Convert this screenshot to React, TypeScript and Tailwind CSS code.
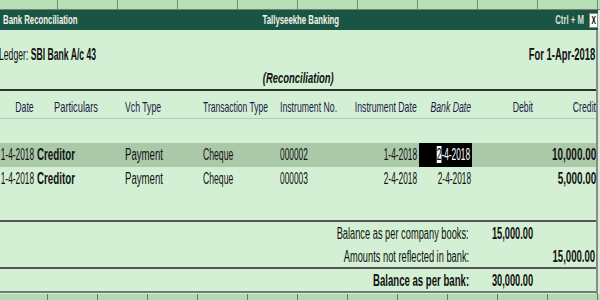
import React from "react";

const S = ({ children, className = "" }: { children: React.ReactNode; className?: string }) => (
  <span className={"inline-block whitespace-nowrap " + className}>{children}</span>
);

const COLS = "grid grid-cols-[35px_85px_80px_75px_70px_75px_55px_60px_62px] items-center";

export default function App() {
  const topCells = Array.from({ length: 9 });
  const botCells = Array.from({ length: 11 });
  return (
    <div
      className="w-[600px] h-[300px] overflow-hidden bg-[#d4f0d4] flex flex-col text-[#111]"
      style={{ fontFamily: '"Liberation Sans", Arial, sans-serif' }}
    >
      {/* top strip */}
      <div className="h-[10px] flex bg-[#b7dfb4] border-b border-[#7c7c7c]">
        <div className="w-[58px] border-r border-[#6f8f6f]" />
        {topCells.map((_, i) => (
          <div key={i} className="w-[60px] shrink-0 border-r border-[#6f8f6f]" />
        ))}
      </div>
      {/* title bar */}
      <div className="h-[20px] w-[598px] bg-[#1a5444] flex items-center text-[13px] font-bold text-[#f4f4e8]">
        <div className="flex-1 pl-[3px]">
          <S className="scale-x-[0.6] origin-left">Bank Reconciliation</S>
        </div>
        <div className="flex-1 flex justify-center">
          <S className="scale-x-[0.6] origin-center">Tallyseekhe Banking</S>
        </div>
        <div className="flex-1 flex justify-end items-center">
          <S className="scale-x-[0.6] origin-right text-[#d8e0d8] mr-[5px]">Ctrl + M</S>
          <div className="w-[9px] h-[15px] bg-white border border-[#888] flex items-center justify-center text-black text-[11px] font-bold">
            <S className="scale-x-[0.6]">X</S>
          </div>
        </div>
      </div>
      {/* body */}
      <div className="w-[598px] flex-1 flex flex-col border-r-2 border-[#8a8a8a]">
        <div className="h-[20px] mt-[15px] flex items-center justify-between text-[16px]">
          <S className="scale-x-[0.54] origin-left -ml-[1px]">
            Ledger: <span className="font-bold">SBI Bank A/c 43</span>
          </S>
          <S className="scale-x-[0.59] origin-right font-bold pr-[1px]">For 1-Apr-2018</S>
        </div>
        <div className="h-[20px] mt-[3px] flex items-center justify-center text-[15px] font-bold italic">
          <S className="scale-x-[0.63] origin-center">(Reconciliation)</S>
        </div>
        <div className="h-[2px] mt-[1px] bg-[#2e2e2e]" />
        {/* header */}
        <div className={COLS + " h-[28px] pt-[5px] text-[15px] text-[#1a1a48] border-b border-[#b9c9b9]"}>
          <div className="flex justify-end pr-[1px]"><S className="scale-x-[0.58] origin-right">Date</S></div>
          <div className="pl-[19px]"><S className="scale-x-[0.62] origin-left">Particulars</S></div>
          <div className="pl-[5px]"><S className="scale-x-[0.58] origin-left">Vch Type</S></div>
          <div className="pl-[3px]"><S className="scale-x-[0.57] origin-left">Transaction Type</S></div>
          <div className="pl-[5px]"><S className="scale-x-[0.58] origin-left">Instrument No.</S></div>
          <div className="flex justify-end pr-[3px]"><S className="scale-x-[0.58] origin-right">Instrument Date</S></div>
          <div className="flex justify-end pr-[4px] italic"><S className="scale-x-[0.58] origin-right">Bank Date</S></div>
          <div className="flex justify-end pr-[2px]"><S className="scale-x-[0.58] origin-right">Debit</S></div>
          <div className="flex justify-end pr-[1px]"><S className="scale-x-[0.58] origin-right">Credit</S></div>
        </div>
        <div className="h-[24px]" />
        {/* row 1 */}
        <div className={COLS + " h-[24px] bg-[#abc9a9] text-[16px]"}>
          <div className="flex justify-end pr-[1px]"><S className="scale-x-[0.52] origin-right">1-4-2018</S></div>
          <div className="pl-[2px] font-bold"><S className="scale-x-[0.61] origin-left">Creditor</S></div>
          <div className="pl-[5px]"><S className="scale-x-[0.6] origin-left">Payment</S></div>
          <div className="pl-[3px]"><S className="scale-x-[0.54] origin-left">Cheque</S></div>
          <div className="pl-[5px]"><S className="scale-x-[0.52] origin-left">000002</S></div>
          <div className="flex justify-end pr-[3px]"><S className="scale-x-[0.52] origin-right">1-4-2018</S></div>
          <div className="h-[24px] -ml-[1px] w-[53px] bg-black flex items-center justify-end pr-[2px] text-white">
            <S className="scale-x-[0.52] origin-right">
              <span className="bg-white text-black">2</span>-4-2018
            </S>
          </div>
          <div />
          <div className="flex justify-end pr-[1px] font-bold"><S className="scale-x-[0.62] origin-right">10,000.00</S></div>
        </div>
        {/* row 2 */}
        <div className={COLS + " h-[24px] text-[16px]"}>
          <div className="flex justify-end pr-[1px]"><S className="scale-x-[0.52] origin-right">1-4-2018</S></div>
          <div className="pl-[2px] font-bold"><S className="scale-x-[0.61] origin-left">Creditor</S></div>
          <div className="pl-[5px]"><S className="scale-x-[0.6] origin-left">Payment</S></div>
          <div className="pl-[3px]"><S className="scale-x-[0.54] origin-left">Cheque</S></div>
          <div className="pl-[5px]"><S className="scale-x-[0.52] origin-left">000003</S></div>
          <div className="flex justify-end pr-[3px]"><S className="scale-x-[0.52] origin-right">2-4-2018</S></div>
          <div className="flex justify-end pr-[4px]"><S className="scale-x-[0.52] origin-right">2-4-2018</S></div>
          <div />
          <div className="flex justify-end pr-[1px] font-bold"><S className="scale-x-[0.62] origin-right">5,000.00</S></div>
        </div>
        <div className="h-[29px]" />
        <div className="h-[2px] bg-[#555]" />
        {/* balances */}
        <div className="h-[23px] grid grid-cols-[470px_64px_62px] items-center text-[16px]">
          <div className="flex justify-end pr-[1px]"><S className="scale-x-[0.58] origin-right">Balance as per company books:</S></div>
          <div className="flex justify-end pr-[1px] font-bold"><S className="scale-x-[0.58] origin-right">15,000.00</S></div>
          <div />
        </div>
        <div className="h-[22px] grid grid-cols-[470px_64px_62px] items-center text-[16px]">
          <div className="flex justify-end pr-[1px]"><S className="scale-x-[0.58] origin-right">Amounts not reflected in bank:</S></div>
          <div />
          <div className="flex justify-end pr-[1px] font-bold"><S className="scale-x-[0.6] origin-right">15,000.00</S></div>
        </div>
        <div className="h-[2px] bg-[#555]" />
        <div className="h-[22px] grid grid-cols-[470px_64px_62px] items-center text-[16px] font-bold">
          <div className="flex justify-end pr-[1px]"><S className="scale-x-[0.6] origin-right">Balance as per bank:</S></div>
          <div className="flex justify-end pr-[1px]"><S className="scale-x-[0.58] origin-right">30,000.00</S></div>
          <div />
        </div>
        <div className="h-[2px] bg-[#777]" />
      </div>
      {/* bottom strip */}
      <div className="h-[6px] flex bg-[#b4dab1]">
        <div className="w-[48px] shrink-0 border-r border-[#5f7f5f]" />
        {botCells.map((_, i) => (
          <div key={i} className="w-[50px] shrink-0 border-r border-[#5f7f5f]" />
        ))}
      </div>
    </div>
  );
}
